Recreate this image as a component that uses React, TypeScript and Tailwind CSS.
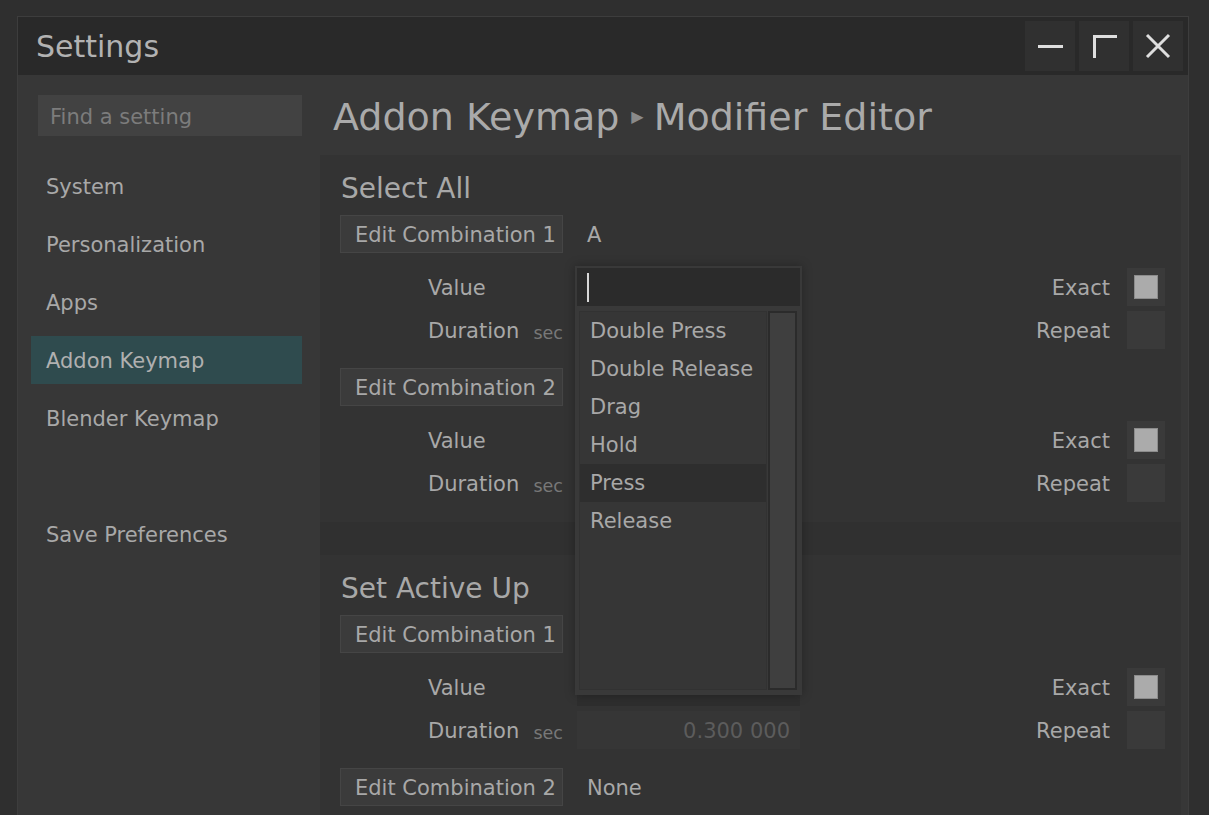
import React from "react";

const font = { fontFamily: '"DejaVu Sans", "Liberation Sans", sans-serif' };

const navItems = ["System", "Personalization", "Apps", "Addon Keymap", "Blender Keymap", "", "Save Preferences"];

const menuItems = ["Double Press", "Double Release", "Drag", "Hold", "Press", "Release"];

function Checkbox({ checked }: { checked?: boolean }) {
  return (
    <div className="flex h-[38px] w-[38px] items-center justify-center bg-[#3a3a3a]">
      {checked && <div className="h-[24px] w-[24px] border border-[#8c8c8c] bg-[#ababab]" />}
    </div>
  );
}

function FieldRow({
  label,
  unit,
  flag,
  checked,
  children,
}: {
  label: string;
  unit?: string;
  flag: string;
  checked?: boolean;
  children?: React.ReactNode;
}) {
  return (
    <div className="flex h-[38px] items-center">
      <div className="flex w-[223px] items-center justify-between pl-[88px] pt-[4px]">
        <span className="text-[21px] text-[#a8a8a8]">{label}</span>
        {unit && <span className="pt-[2px] text-[17.5px] text-[#787878]">{unit}</span>}
      </div>
      <div className="relative ml-[14px] h-[38px] w-[223px]">{children}</div>
      <div className="flex flex-1 items-center justify-end gap-[17px]">
        <span className="pt-[4px] text-[21px] text-[#a8a8a8]">{flag}</span>
        <Checkbox checked={checked} />
      </div>
    </div>
  );
}

function Combo({
  n,
  keyText,
  first,
  children,
}: {
  n: number;
  keyText?: string;
  first?: boolean;
  children?: React.ReactNode;
}) {
  return (
    <>
      <div className={first ? "mt-[10px] flex h-[38px] items-center" : "mt-[19px] flex h-[38px] items-center"}>
        <div className="flex h-[38px] w-[223px] items-center border border-[#454545] bg-[#3b3b3b] pl-[14px] pt-[4px] text-[21px] text-[#a8a8a8]">
          Edit Combination {n}
        </div>
        {keyText && <span className="ml-[24px] pt-[4px] text-[21px] text-[#a8a8a8]">{keyText}</span>}
      </div>
      {children}
    </>
  );
}

function Dropdown() {
  return (
    <div className="absolute left-[-2px] top-[-2px] z-10 flex h-[429px] w-[227px] flex-col bg-[#393939] p-[2px] shadow-[0_0_10px_rgba(0,0,0,0.3)]">
      <div className="flex h-[38px] items-center bg-[#2b2b2b] pl-[10px]">
        <div className="h-[29px] w-[2px] bg-[#d8d8d8]" />
      </div>
      <div className="mt-[5px] flex h-[379px] pl-[2px] pr-[3px]">
        <div className="flex flex-1 flex-col border border-[#323232] bg-[#363636]">
          {menuItems.map((item) => (
            <div
              key={item}
              className={
                item === "Press"
                  ? "flex h-[38px] items-center bg-[#2e2e2e] pl-[10px] pt-[2px] text-[21px] text-[#a8a8a8]"
                  : "flex h-[38px] items-center pl-[10px] pt-[2px] text-[21px] text-[#a8a8a8]"
              }
            >
              {item}
            </div>
          ))}
        </div>
        <div className="ml-[1px] w-[29px] border-[2px] border-[#2b2b2b] bg-[#3f3f3f]" />
      </div>
    </div>
  );
}

function TitleButton({ children }: { children: React.ReactNode }) {
  return (
    <div className="flex h-[50px] w-[50px] items-center justify-center bg-[#303030]">
      <svg width="26" height="26" viewBox="0 0 26 26" fill="none" stroke="#dedede" strokeWidth="3">
        {children}
      </svg>
    </div>
  );
}

export default function App() {
  return (
    <div className="h-[815px] w-[1209px] overflow-hidden bg-[#2f2f2f] pl-[17px] pr-[20px] pt-[16px]" style={font}>
      <div className="flex h-[820px] flex-col border border-[#3d3d3d] bg-[#373737]">
        <div className="flex h-[58px] items-center justify-between bg-[#292929] pl-[18px] pr-[5px]">
          <span className="text-[30px] text-[#b2b2b2]">Settings</span>
          <div className="flex gap-[4px]">
            <TitleButton>
              <path d="M1 13.5h25" />
            </TitleButton>
            <TitleButton>
              <path d="M3.5 25V3.5H26" />
            </TitleButton>
            <TitleButton>
              <path d="M2 2l22 22M24 2L2 24" />
            </TitleButton>
          </div>
        </div>

        <div className="flex flex-1">
          <aside className="w-[302px] shrink-0">
            <div className="ml-[20px] mt-[20px] flex h-[41px] w-[264px] items-center bg-[#424242] pl-[12px] pt-[4px] text-[21px] text-[#7c7c7c]">
              Find a setting
            </div>
            <nav className="ml-[13px] mt-[26px] flex w-[271px] flex-col gap-[10px]">
              {navItems.map((item, i) => (
                <div
                  key={i}
                  className={
                    item === "Addon Keymap"
                      ? "flex h-[48px] items-center bg-[#2f4b4e] pl-[15px] pt-[4px] text-[21px] text-[#b0b0b0]"
                      : "flex h-[48px] items-center pl-[15px] pt-[4px] text-[21px] text-[#a8a8a8]"
                  }
                >
                  {item}
                </div>
              ))}
            </nav>
          </aside>

          <main className="flex flex-1 flex-col pr-[7px]">
            <div className="flex h-[80px] items-center pl-[13px] pt-[4px] text-[38px] text-[#aaaaaa]">
              Addon Keymap
              <span className="ml-[12px] mr-[10px] text-[16px] text-[#8a8a8a]">▶</span>
              Modifier Editor
            </div>
            <div className="flex flex-1 flex-col gap-[33px] bg-[#303030]">
              <section className="bg-[#333333] pb-[20px] pl-[20px] pr-[16px] pt-[16px]">
                <h2 className="flex h-[34px] items-center pl-[1px] pt-[2px] text-[28px] text-[#a8a8a8]">Select All</h2>
                <Combo n={1} keyText="A" first>
                  <div className="mt-[15px] flex flex-col gap-[5px]">
                    <FieldRow label="Value" flag="Exact" checked>
                      <div className="h-full w-full bg-[#2b2b2b]" />
                      <Dropdown />
                    </FieldRow>
                    <FieldRow label="Duration" unit="sec" flag="Repeat" />
                  </div>
                </Combo>
                <Combo n={2}>
                  <div className="mt-[15px] flex flex-col gap-[5px]">
                    <FieldRow label="Value" flag="Exact" checked />
                    <FieldRow label="Duration" unit="sec" flag="Repeat" />
                  </div>
                </Combo>
              </section>

              <section className="flex-1 bg-[#333333] pl-[20px] pr-[16px] pt-[16px]">
                <h2 className="flex h-[34px] items-center pl-[1px] pt-[2px] text-[28px] text-[#a8a8a8]">Set Active Up</h2>
                <Combo n={1} first>
                  <div className="mt-[15px] flex flex-col gap-[5px]">
                    <FieldRow label="Value" flag="Exact" checked>
                      <div className="h-full w-full bg-[#2e2e2e]" />
                    </FieldRow>
                    <FieldRow label="Duration" unit="sec" flag="Repeat">
                      <div className="flex h-full w-full items-center justify-end bg-[#363636] pr-[10px] pt-[4px] text-[21px] text-[#5c5c5c]">
                        0.300 000
                      </div>
                    </FieldRow>
                  </div>
                </Combo>
                <Combo n={2} keyText="None" />
              </section>
            </div>
          </main>
        </div>
      </div>
    </div>
  );
}
